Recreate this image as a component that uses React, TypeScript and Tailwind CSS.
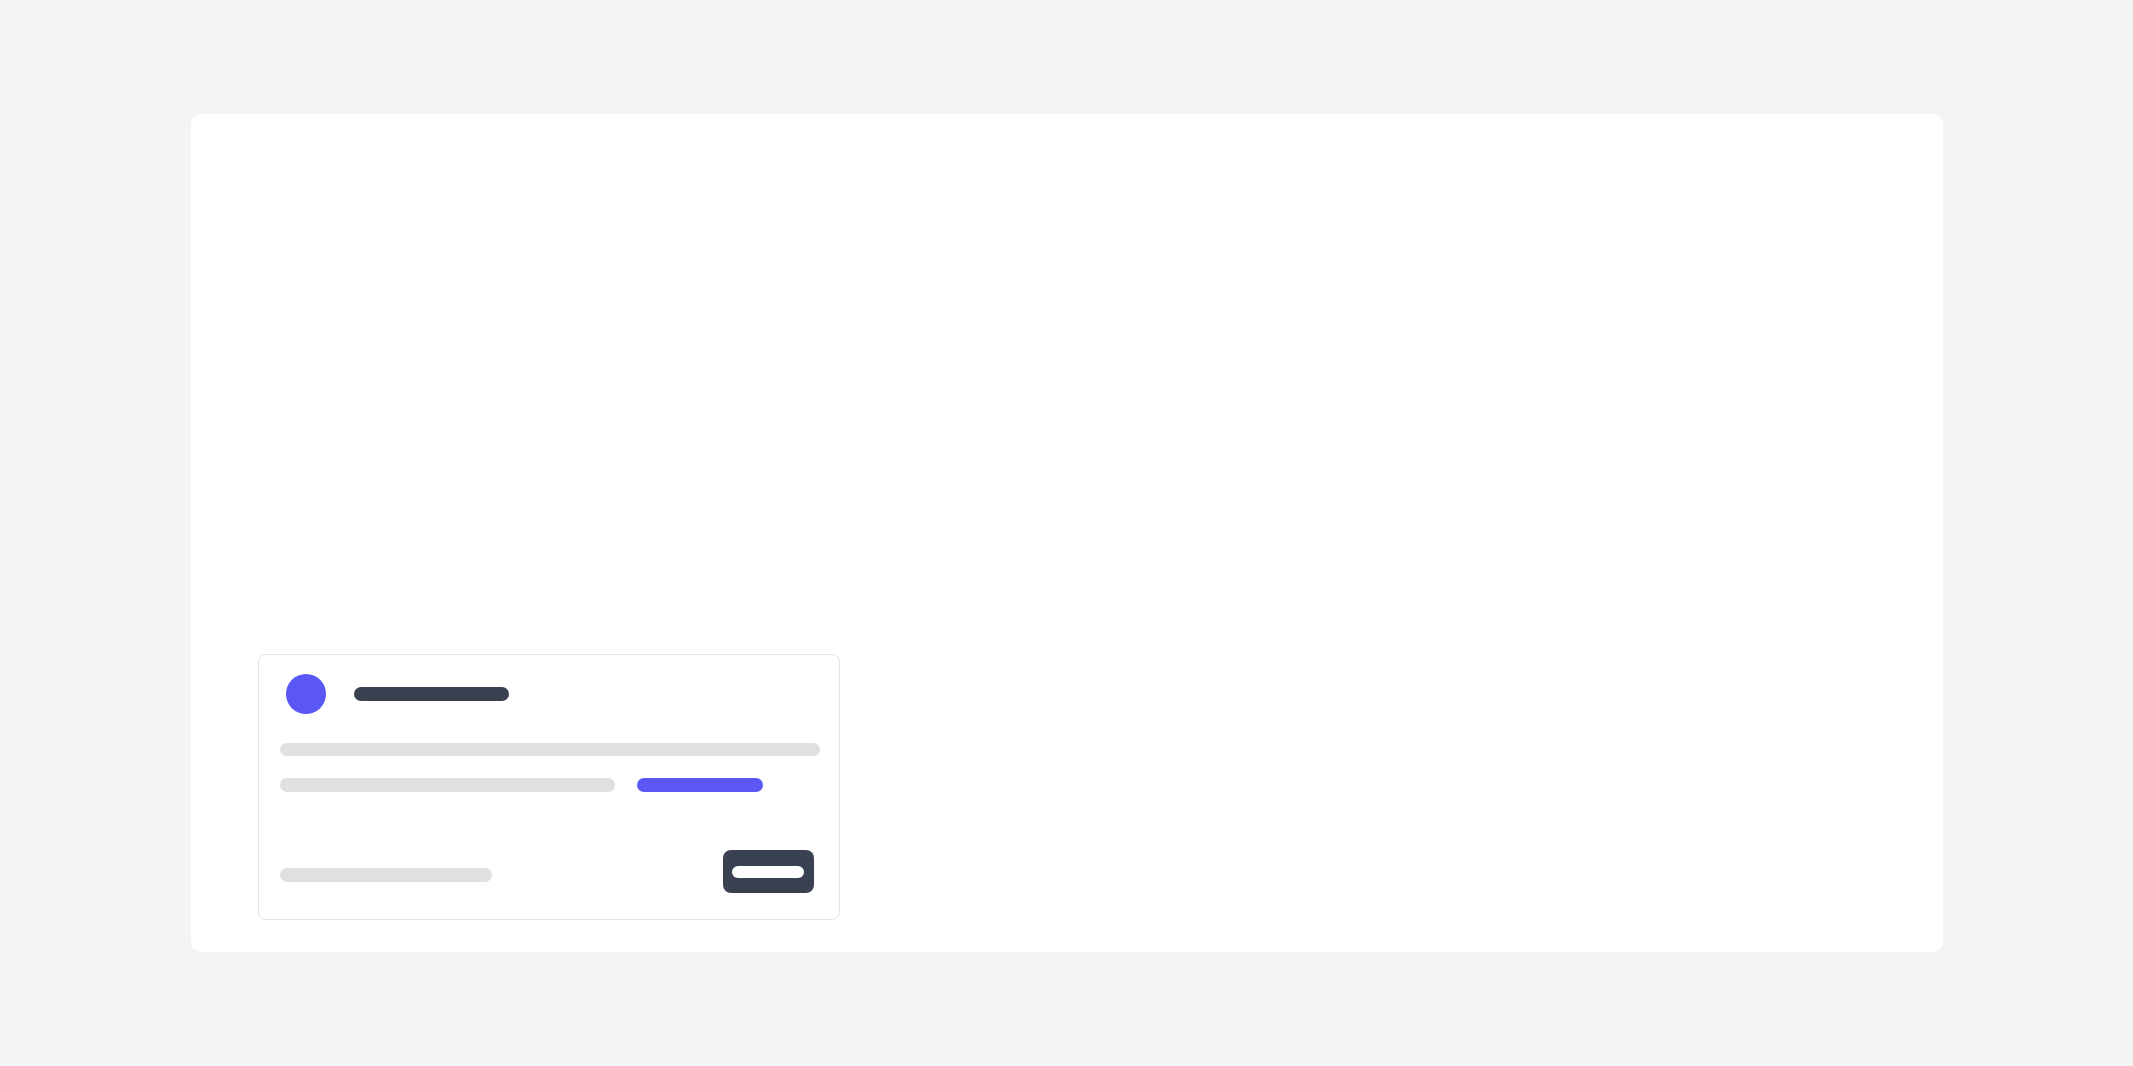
export default function App() {
  return (
    <div className="w-[2133px] h-[1066px] bg-[#f3f4f6] flex items-center justify-center">
      <div className="w-[1752px] h-[838px] bg-white rounded-[10px] flex flex-col justify-end pl-[67px] pb-[32px]">
        <div className="w-[582px] h-[266px] border border-[#e2e3e3] rounded-[8px] bg-white pl-[21px] pr-[19px] pt-[19px] flex flex-col">
          <div className="flex items-center gap-[28px] ml-[6px]">
            <div className="w-10 h-10 rounded-full bg-[#5b57f5]" />
            <div className="w-[155px] h-[14px] rounded-full bg-[#3a4151]" />
          </div>
          <div className="mt-[29px] h-[13px] w-full rounded-full bg-[#dfe0e0]" />
          <div className="mt-[22px] flex gap-[22px]">
            <div className="w-[335px] h-[14px] rounded-full bg-[#dfe0e0]" />
            <div className="w-[126px] h-[14px] rounded-full bg-[#5b57f5]" />
          </div>
          <div className="mt-[58px] flex items-start justify-between pr-[6px]">
            <div className="mt-[18px] w-[212px] h-[14px] rounded-full bg-[#dfe0e0]" />
            <div className="w-[91px] h-[43px] rounded-[8px] bg-[#3a4151] flex items-center justify-center">
              <div className="w-[72px] h-[12px] rounded-full bg-white" />
            </div>
          </div>
        </div>
      </div>
    </div>
  );
}
